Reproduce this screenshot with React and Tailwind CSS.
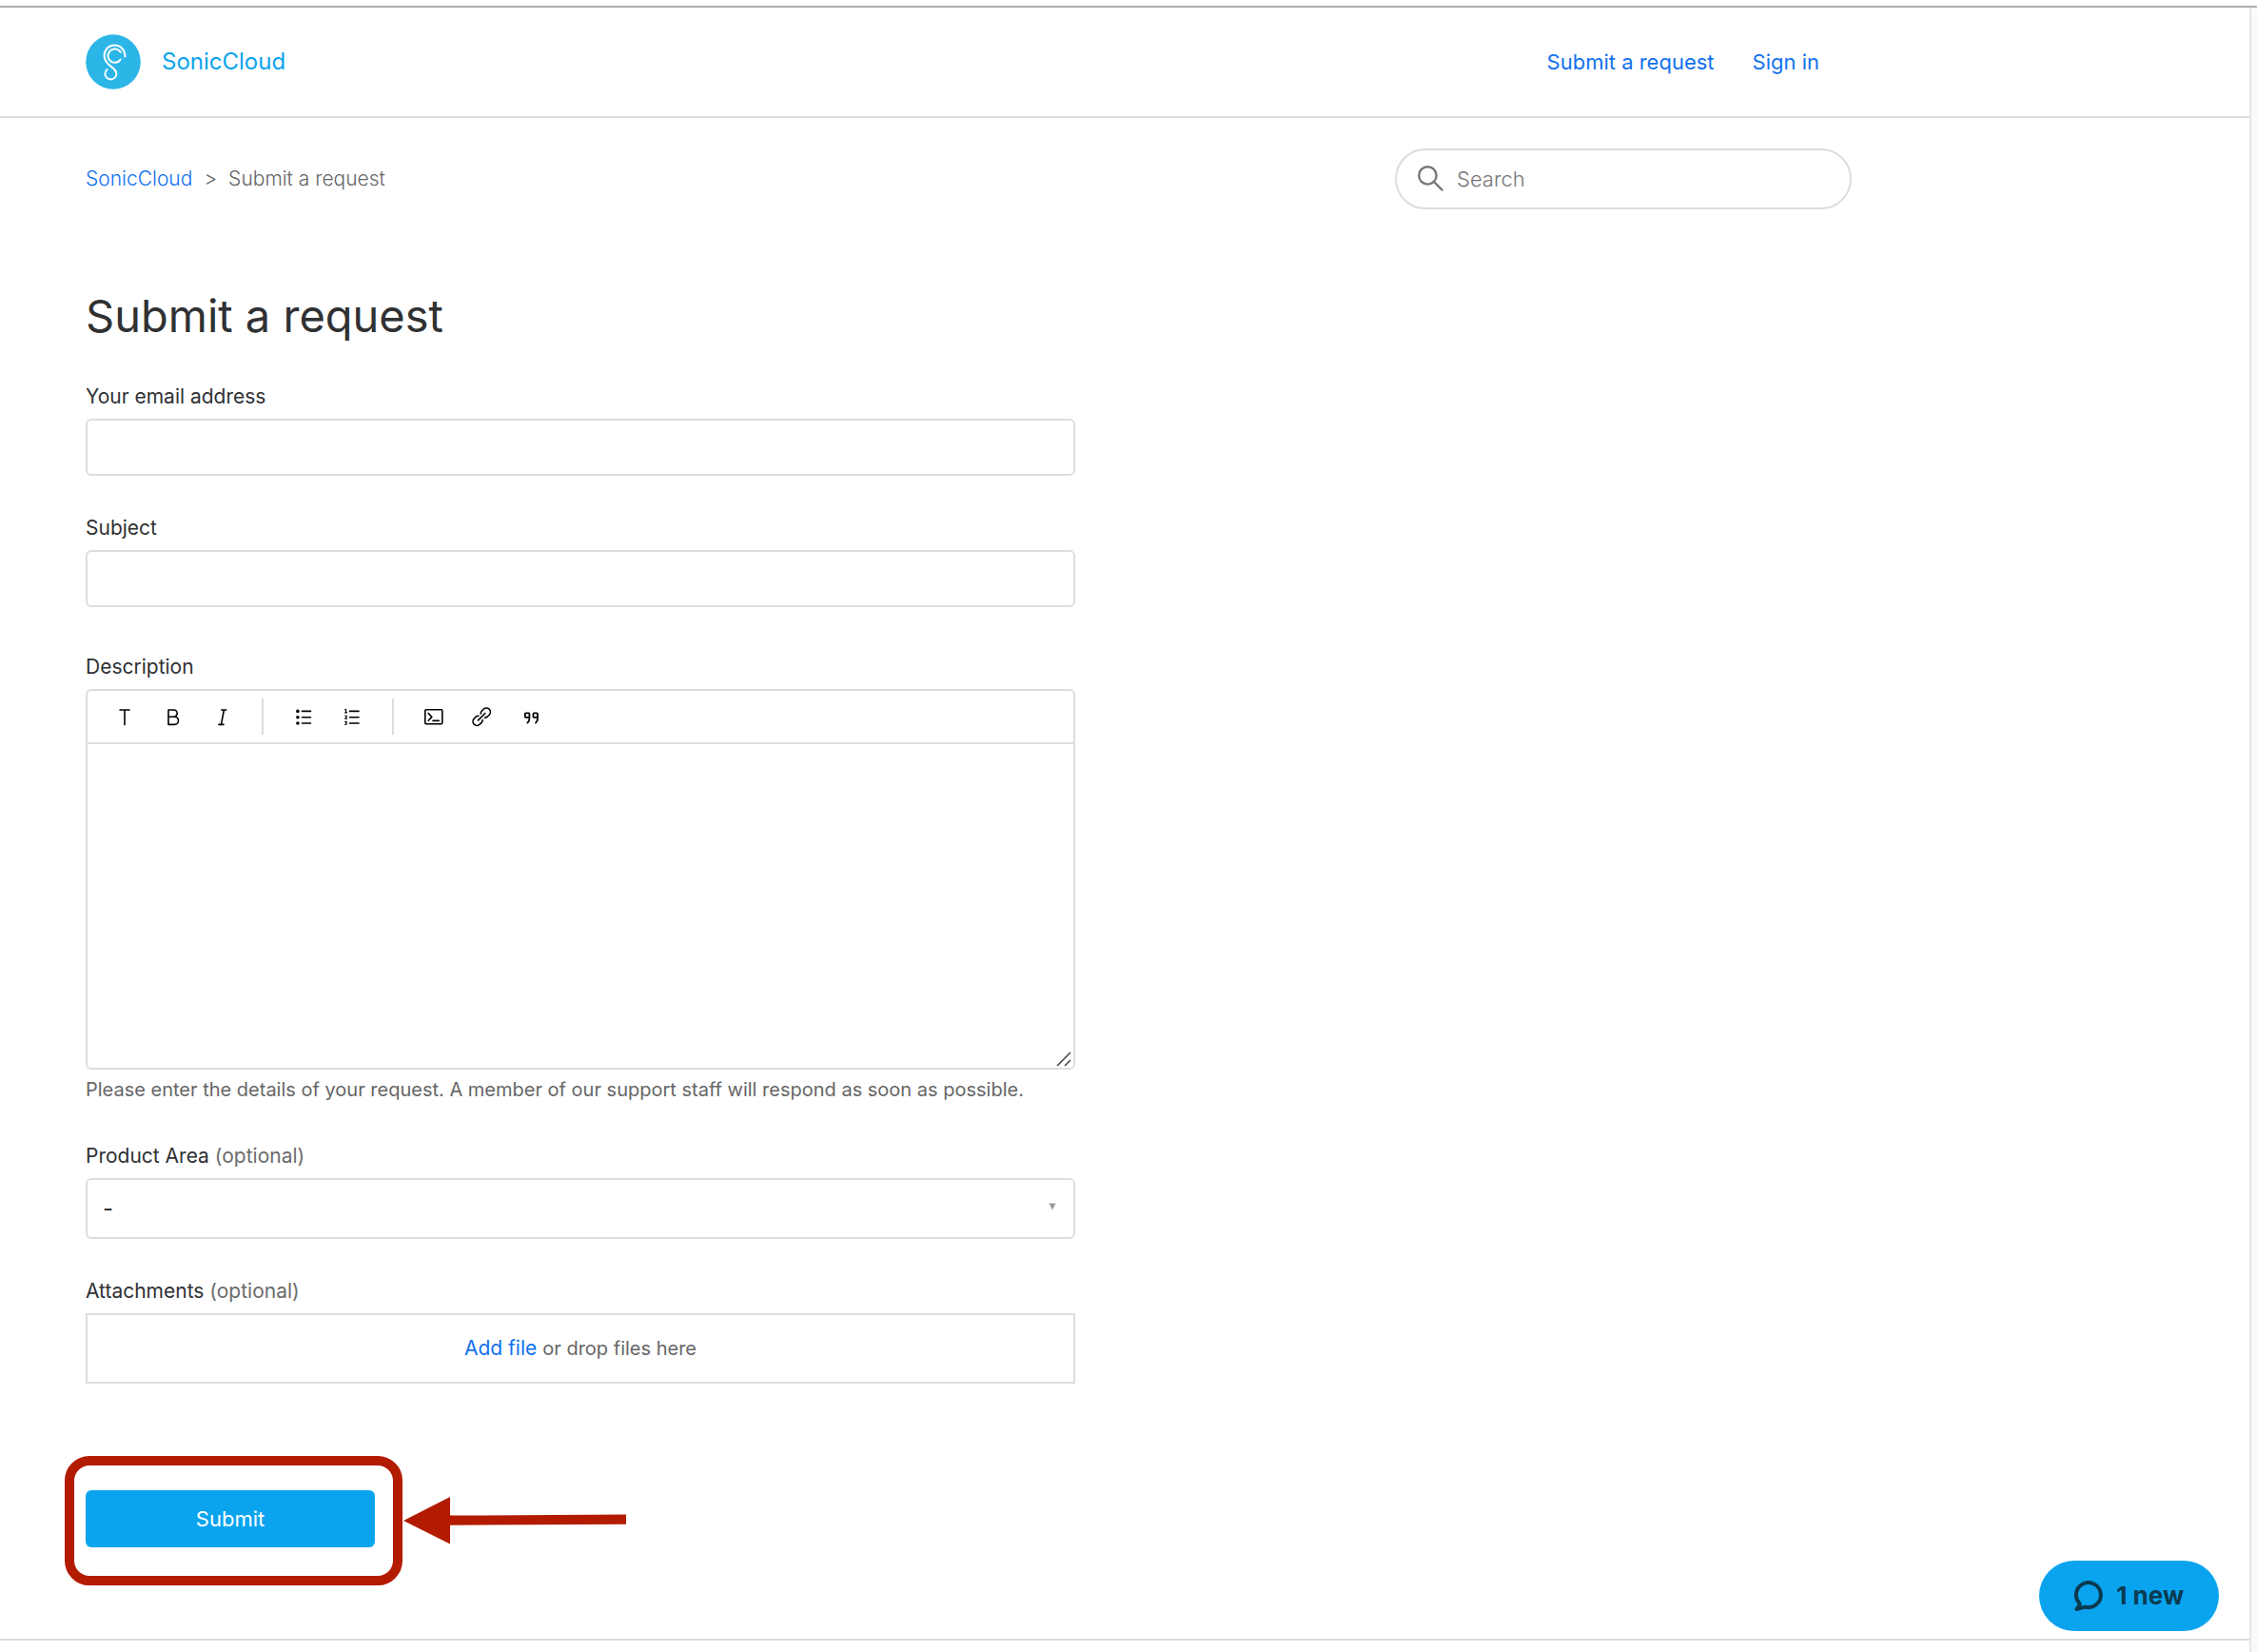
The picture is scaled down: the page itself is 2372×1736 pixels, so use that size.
const fieldBorder = "border-2 border-[#dddddd] rounded-md";
const labelText = "text-[21px] leading-8 text-[#2f3133]";

function Logo() {
  return (
    <svg viewBox="0 0 58 58" className="size-[58px]" aria-hidden="true">
      <circle cx="29" cy="29" r="28.8" fill="#2bb6e7" />
      <g fill="none" stroke="#ffffff" strokeWidth="2" strokeLinecap="round">
        <path d="M41.4 23.4C41.4 16.4 36.6 11.4 30.4 11.4C24.2 11.4 19.6 16.2 19.6 22.4C19.6 27 21.8 29.8 25.4 32.8C29 35.8 32.4 37.6 32.4 41.4A6 6 0 0 1 20.4 41.4C20.4 39.4 21.2 38 22.6 37" />
        <path d="M36.6 18.6A7.2 7.2 0 1 0 36.6 26.6" />
      </g>
    </svg>
  );
}

function Icon({ children }) {
  return (
    <svg
      viewBox="0 0 24 24"
      className="size-6"
      fill="none"
      stroke="#000000"
      strokeWidth="1.6"
      strokeLinecap="round"
      strokeLinejoin="round"
      aria-hidden="true"
    >
      {children}
    </svg>
  );
}

function ToolButton({ label, children }) {
  return (
    <button type="button" aria-label={label} className="flex h-[38px] w-[51px] items-center justify-center">
      <Icon>{children}</Icon>
    </button>
  );
}

function Divider() {
  return <span className="mr-4 ml-[17px] h-[38px] w-[2px] bg-[#dddddd]" />;
}

function Toolbar() {
  return (
    <div className="flex h-[56px] items-center border-b-2 border-[#dddddd] px-[13px]">
      <ToolButton label="Text style">
        <path d="M7 5h10M12 5V20.6" />
      </ToolButton>
      <ToolButton label="Bold">
        <path d="M7 5H12.6a3.6 3.6 0 0 1 0 7.2H7zM7 12.2h6.4a4 4 0 0 1 0 8.2H7z" />
      </ToolButton>
      <ToolButton label="Italic">
        <path d="M11.8 5h5M9 20.4h5M14.4 5l-3 15.4" />
      </ToolButton>
      <Divider />
      <ToolButton label="Bulleted list">
        <path d="M10.5 6.4h9M10.5 12.8h9M10.5 19h9" />
        <g fill="#000000" stroke="none">
          <circle cx="5.9" cy="6.4" r="1.8" />
          <circle cx="5.9" cy="12.8" r="1.8" />
          <circle cx="5.9" cy="19" r="1.8" />
        </g>
      </ToolButton>
      <ToolButton label="Numbered list">
        <path d="M9.5 6.4h9.5M9.5 12.8h9.5M9.5 19h9.5" />
        <path
          strokeWidth="1.1"
          d="M4.6 4.9l1-.6v3.6M4.6 7.9h2M4.6 11.2h1.7v1.4L4.6 14.2h2M4.6 17.3h1.8l-1 1.3c1.2 0 1.3 1.9-.8 1.9"
        />
      </ToolButton>
      <Divider />
      <ToolButton label="Code block">
        <rect x="2.8" y="4.8" width="18" height="15" rx="1" />
        <path d="M6.2 8.6l3.6 3.8-3.6 3.8M11 16.4h6.2" />
      </ToolButton>
      <ToolButton label="Link">
        <g transform="rotate(-45 11.2 12.2)">
          <path d="M6 12.2h10.4" />
          <path d="M12.8 9.2a4 4 0 0 1 2.6-1.2h2.8a4.2 4.2 0 0 1 0 8.4h-2.8a4 4 0 0 1-2.6-1.2" />
          <path d="M9.6 9.2a4 4 0 0 0-2.6-1.2h-2.8a4.2 4.2 0 0 0 0 8.4h2.8a4 4 0 0 0 2.6-1.2" />
        </g>
      </ToolButton>
      <ToolButton label="Quote">
        <path
          strokeWidth="1.8"
          d="M10.4 12.9H6.8a1 1 0 0 1-1-1V9.4a1 1 0 0 1 1-1h2.6a1 1 0 0 1 1 1v4.6c0 2.2-.7 3.6-2 4.6M19 12.9h-3.6a1 1 0 0 1-1-1V9.4a1 1 0 0 1 1-1H18a1 1 0 0 1 1 1v4.6c0 2.2-.7 3.6-2 4.6"
        />
      </ToolButton>
    </div>
  );
}

function Header() {
  return (
    <header className="border-b-2 border-[#dddddd]">
      <div className="flex h-[114px] max-w-[1946px] items-center justify-between pr-[34px] pl-[90px]">
        <a href="#home" className="flex items-center gap-[22px] text-[24px] leading-[30px] text-[#0aa4ee]">
          <Logo />
          <span>SonicCloud</span>
        </a>
        <nav className="flex gap-10 text-[22px] leading-[30px] text-[#1271ee]">
          <a href="#request">Submit a request</a>
          <a href="#signin">Sign in</a>
        </nav>
      </div>
    </header>
  );
}

function SubNav() {
  return (
    <div className="flex items-center justify-between">
      <nav aria-label="Breadcrumb" className="flex gap-3 text-[21px] leading-8 font-light text-[#666666]">
        <a href="#home" className="text-[#1271ee]">SonicCloud</a>
        <span>&gt;</span>
        <span>Submit a request</span>
      </nav>
      <label className="flex h-16 w-[480px] items-center gap-[14px] rounded-full border-2 border-[#dddddd] pr-6 pl-[21px]">
        <svg viewBox="0 0 28 28" className="size-7 shrink-0" fill="none" stroke="#777777" strokeWidth="2.4" strokeLinecap="round" aria-hidden="true">
          <circle cx="11.4" cy="10.4" r="9.2" />
          <path d="M18 17L26.6 25.6" />
        </svg>
        <input
          type="search"
          aria-label="Search"
          placeholder="Search"
          className="w-full min-w-0 bg-transparent text-[22px] leading-[30px] font-light outline-none placeholder:text-[#777777]"
        />
      </label>
    </div>
  );
}

function TextField({ id, label, type }) {
  return (
    <div className="flex flex-col gap-[7px]">
      <label htmlFor={id} className={labelText}>{label}</label>
      <input id={id} type={type} className={`h-[60px] w-full px-4 text-[21px] ${fieldBorder}`} />
    </div>
  );
}

function Optional() {
  return <span className="text-[#6c6c6c]">(optional)</span>;
}

function RequestForm() {
  return (
    <form className="flex w-full max-w-[1040px] flex-col" onSubmit={(e) => e.preventDefault()}>
      <div className="flex flex-col gap-[39px]">
        <TextField id="email" label="Your email address" type="email" />
        <TextField id="subject" label="Subject" type="text" />
      </div>

      <div className="mt-[47px] flex flex-col gap-[7px]">
        <label htmlFor="description" className={labelText}>Description</label>
        <div className={`relative ${fieldBorder}`}>
          <Toolbar />
          <textarea id="description" aria-describedby="description-hint" className="block h-[340px] w-full resize-none px-4 py-3 text-[21px] outline-none" />
          <svg viewBox="0 0 16 16" className="absolute right-[2px] bottom-[1px] size-4" stroke="#4a4a4a" strokeWidth="1.6" aria-hidden="true">
            <path d="M1 15L15 1M9 15L15 9" />
          </svg>
        </div>
        <p id="description-hint" className="text-[20px] leading-7 text-[#666666]">
          Please enter the details of your request. A member of our support staff will respond as soon as possible.
        </p>
      </div>

      <div className="mt-10 flex flex-col gap-[7px]">
        <label htmlFor="product-area" className={labelText}>Product Area <Optional /></label>
        <div className="relative">
          <select id="product-area" className={`h-16 w-full appearance-none bg-white px-4 text-[24px] text-[#2f3133] ${fieldBorder}`}>
            <option>-</option>
          </select>
          <svg viewBox="0 0 8 8" className="pointer-events-none absolute top-[26px] right-[20px] size-2" fill="#999999" aria-hidden="true">
            <path d="M0.5 0.5H7.5L4 7.5Z" />
          </svg>
        </div>
      </div>

      <div className="mt-[39px] flex flex-col gap-[7px]">
        <label htmlFor="attachments" className={labelText}>Attachments <Optional /></label>
        <div className="relative flex h-[74px] items-center justify-center gap-[6px] border-2 border-[#dddddd] text-[20px] leading-8 text-[#666666]">
          <label htmlFor="attachments" className="text-[21px] text-[#1271ee]">Add file</label>
          <span>or drop files here</span>
          <input id="attachments" type="file" className="sr-only" />
        </div>
      </div>

      <div className="relative mt-28 w-fit">
        <button type="submit" className="h-[60px] w-[304px] rounded-md bg-[#0aa4ee] text-[22px] leading-[30px] text-white">
          Submit
        </button>
        <div className="pointer-events-none absolute -top-9 -right-[29px] -bottom-10 -left-[22px] rounded-[26px] border-[10px] border-[#b31b00]" />
        <svg viewBox="0 0 236 52" className="pointer-events-none absolute top-[6px] left-[334px] h-[52px] w-[236px]" fill="#b31b00" aria-hidden="true">
          <path d="M0 26L49 1V20.6L234 19.6V29.8L49 30.8V50.5Z" />
        </svg>
      </div>
    </form>
  );
}

function ChatButton() {
  return (
    <button type="button" className="fixed right-10 bottom-[22px] flex h-[74px] items-center gap-[14px] rounded-full bg-[#0aa4ee] px-[37px] text-[26px] leading-[30px] font-bold text-[#0b3a50]">
      <svg viewBox="0 0 30 32" className="h-8 w-[30px]" fill="none" stroke="currentColor" strokeWidth="4" strokeLinecap="round" strokeLinejoin="round" aria-hidden="true">
        <path d="M5.6 24.2A13 13 0 1 1 11.4 27.6L2.4 30C4.4 28.6 5.4 26.8 5.6 24.2Z" />
      </svg>
      <span>1 new</span>
    </button>
  );
}

export default function App() {
  return (
    <div className="flex min-h-screen flex-col bg-white pt-[6px] font-['Inter','Liberation_Sans',sans-serif]">
      <div className="flex grow border-t-2 border-[#adadad]">
        <div className="flex min-w-0 grow flex-col">
          <Header />
          <main className="flex max-w-[1946px] flex-col pt-8 pb-24 pl-[90px]">
            <SubNav />
            <h1 className="mt-20 mb-[37px] text-[47px] leading-16 text-[#2f3133]">Submit a request</h1>
            <RequestForm />
          </main>
          <footer className="grow border-t-2 border-[#dddddd]" />
        </div>
        <div className="w-2 shrink-0 border-l-2 border-[#e6e6e6] bg-[#fafafa]" />
      </div>
      <ChatButton />
    </div>
  );
}
